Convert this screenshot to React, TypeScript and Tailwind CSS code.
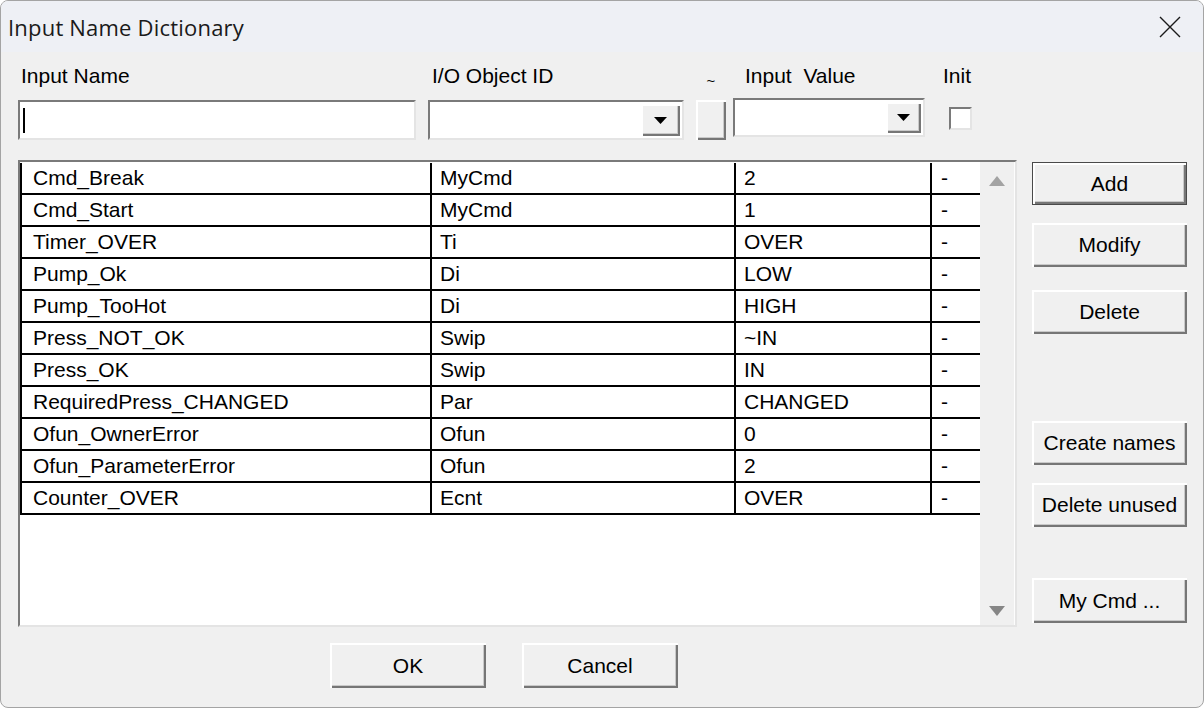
const rows: [string, string, string][] = [
  ['Cmd_Break', 'MyCmd', '2'],
  ['Cmd_Start', 'MyCmd', '1'],
  ['Timer_OVER', 'Ti', 'OVER'],
  ['Pump_Ok', 'Di', 'LOW'],
  ['Pump_TooHot', 'Di', 'HIGH'],
  ['Press_NOT_OK', 'Swip', '~IN'],
  ['Press_OK', 'Swip', 'IN'],
  ['RequiredPress_CHANGED', 'Par', 'CHANGED'],
  ['Ofun_OwnerError', 'Ofun', '0'],
  ['Ofun_ParameterError', 'Ofun', '2'],
  ['Counter_OVER', 'Ecnt', 'OVER'],
];

const sunken =
  'border-2 border-t-[#7a7a7a] border-l-[#7a7a7a] border-r-[#e4e4e4] border-b-[#e4e4e4]';
const raised =
  'bg-[#f0f0f0] shadow-[inset_2px_2px_0_#ffffff,inset_-2px_-2px_0_#767676,inset_-3px_-3px_0_#c9c9c9]';

function DlgButton({
  label,
  isDefault,
  className = '',
}: {
  label: string;
  isDefault?: boolean;
  className?: string;
}) {
  return (
    <button
      className={`${raised} flex items-center justify-center text-[21px] text-black ${
        isDefault ? 'border border-[#4a4a4a]' : ''
      } ${className}`}
    >
      {label}
    </button>
  );
}

function Arrow({ up, color }: { up?: boolean; color: string }) {
  return (
    <svg width="16" height="10" viewBox="0 0 16 10">
      <polygon points={up ? '8,0 16,10 0,10' : '0,0 16,0 8,10'} fill={color} />
    </svg>
  );
}

function Combo({ btnWidth, className = '' }: { btnWidth: string; className?: string }) {
  return (
    <div className={`${sunken} bg-white flex justify-end p-[2px] ${className}`}>
      <div className={`${raised} ${btnWidth} flex items-center justify-center`}>
        <svg width="13" height="7" viewBox="0 0 13 7">
          <polygon points="0,0 13,0 6.5,7" fill="#000" />
        </svg>
      </div>
    </div>
  );
}

export default function App() {
  return (
    <div
      className="w-[1204px] h-[708px] bg-white"
      style={{ fontFamily: '"Liberation Sans", Arial, sans-serif' }}
    >
      <div className="w-full h-full rounded-[8px] border border-[#a4a4a4] overflow-hidden flex flex-col bg-[#f0f0f0]">
        {/* Title bar */}
        <div className="h-[51px] bg-[#eef0f5] flex items-center justify-between pl-[7px] pr-[22px]">
          <span
            className="text-[22px] tracking-[0.2px] text-[#1a1a1a] leading-none"
            style={{ fontFamily: '"Open Sans", "Noto Sans", sans-serif' }}
          >
            Input Name Dictionary
          </span>
          <svg width="22" height="22" viewBox="0 0 22 22">
            <path d="M1 1L21 21M21 1L1 21" stroke="#1a1a1a" strokeWidth="1.4" />
          </svg>
        </div>

        <div className="flex-1 flex flex-col pl-[17px] text-black text-[21px]">
          {/* Entry fields */}
          <div className="flex mt-[10px]">
            <div className="w-[398px] flex flex-col">
              <div className="h-[28px] flex items-center pl-[3px]">Input Name</div>
              <div className={`${sunken} bg-white h-[40px] mt-[10px] flex items-center`}>
                <div className="w-[2px] h-[25px] bg-black ml-[3px]" />
              </div>
            </div>
            <div className="w-[256px] ml-[12px] flex flex-col">
              <div className="h-[28px] flex items-center pl-[4px]">I/O Object ID</div>
              <Combo btnWidth="w-[39px]" className="h-[40px] mt-[10px]" />
            </div>
            <div className="w-[30px] ml-[12px] flex flex-col">
              <div className="h-[28px] flex items-center justify-center pt-[10px] text-[15px]">~</div>
              <div className={`${raised} h-[40px] mt-[10px]`} />
            </div>
            <div className="w-[192px] ml-[7px] flex flex-col">
              <div className="h-[28px] flex items-center pl-[12px] whitespace-pre">Input  Value</div>
              <Combo btnWidth="w-[35px]" className="h-[39px] mt-[8px]" />
            </div>
            <div className="ml-[18px] flex flex-col">
              <div className="h-[28px] flex items-center">Init</div>
              <div className={`${sunken} bg-white w-[23px] h-[23px] ml-[6px] mt-[17px]`} />
            </div>
          </div>

          {/* List + side buttons */}
          <div className="flex mt-[20px]">
            <div className={`${sunken} w-[999px] h-[467px] flex`}>
              <div className="w-[960px] bg-white flex flex-col pt-[1px]">
                {rows.map(([name, obj, val]) => (
                  <div key={name} className="flex h-[32px] border-b-2 border-black shrink-0">
                    <div className="w-[412px] border-l-2 border-r-2 border-black pl-[11px] flex items-center">
                      {name}
                    </div>
                    <div className="w-[304px] border-r-2 border-black pl-[8px] flex items-center">
                      {obj}
                    </div>
                    <div className="w-[196px] border-r-2 border-black pl-[8px] flex items-center">
                      {val}
                    </div>
                    <div className="w-[48px] pl-[9px] flex items-center">-</div>
                  </div>
                ))}
              </div>
              <div className="flex-1 bg-[#f0f0f0] border-r border-[#fdfdfd] flex flex-col items-center justify-between pt-[14px] pb-[9px]">
                <Arrow up color="#a3a3a3" />
                <Arrow color="#868686" />
              </div>
            </div>

            <div className="w-[155px] ml-[15px] flex flex-col">
              <DlgButton label="Add" isDefault className="h-[43px] mt-[2px]" />
              <DlgButton label="Modify" className="h-[44px] mt-[18px]" />
              <DlgButton label="Delete" className="h-[44px] mt-[23px]" />
              <DlgButton label="Create names" className="h-[44px] mt-[87px]" />
              <DlgButton label="Delete unused" className="h-[44px] mt-[18px]" />
              <DlgButton label="My Cmd ..." className="h-[45px] mt-[51px]" />
            </div>
          </div>

          {/* Bottom buttons */}
          <div className="flex mt-[16px]">
            <DlgButton label="OK" className="w-[156px] h-[45px] ml-[312px]" />
            <DlgButton label="Cancel" className="w-[156px] h-[45px] ml-[36px]" />
          </div>
        </div>
      </div>
    </div>
  );
}
